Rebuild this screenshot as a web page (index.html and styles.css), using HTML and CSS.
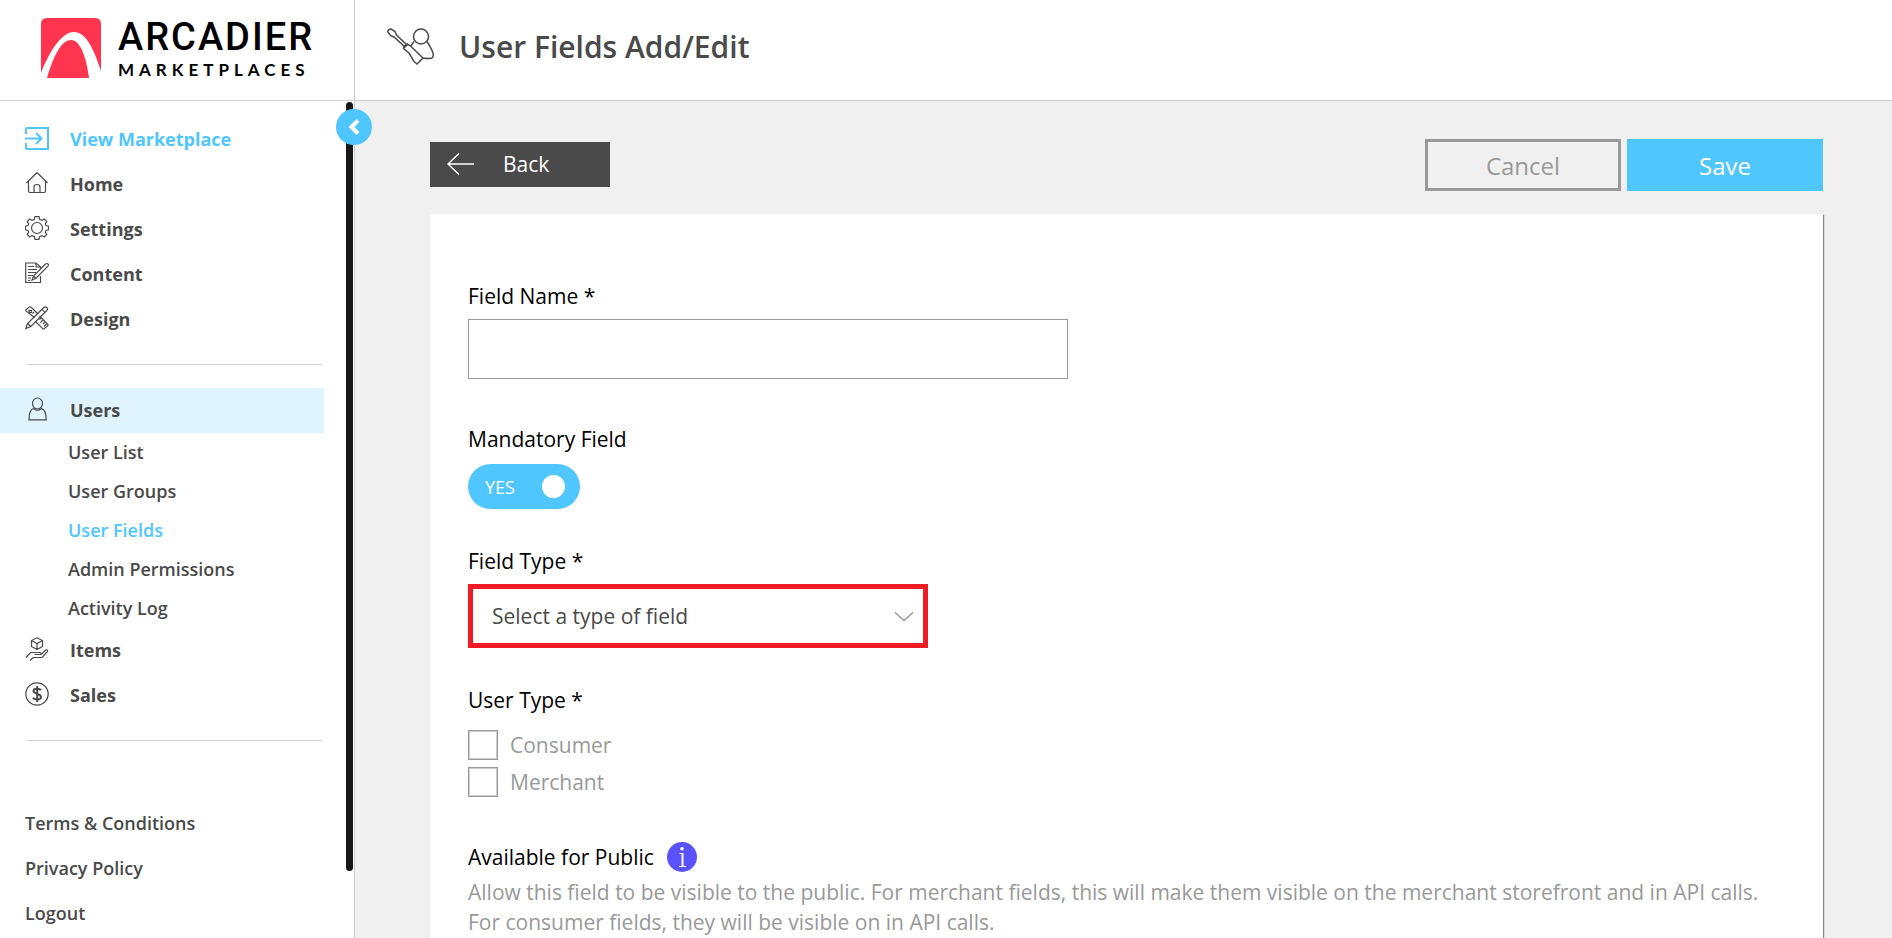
FILE: index.html
```
<!DOCTYPE html>
<html lang="en">

<head>
    <meta charset="utf-8">
    <meta name="viewport" content="width=device-width, initial-scale=1">
    <title>User Fields Add/Edit</title>
    <link rel="stylesheet" href="styles.css">
</head>

<body>
    <div class="page">
        <aside class="sidebar">
            <a class="logo" href="#">
                <svg class="logo-mark" width="60" height="60" viewBox="0 0 60 60">
                    <path fill="#ff3550" d="M0 55V6Q0 0 6 0H54Q60 0 60 6V53C52 28 44 14 33 14C21 14 9 32 0 55Z" />
                    <path fill="#ff3550" d="M6 60C12 39 20 22 30 22C39 22 45 38 48 60Z" />
                </svg>
                <span class="logo-text">
                    <span class="logo-name">ARCADIER</span>
                    <span class="logo-sub">MARKETPLACES</span>
                </span>
            </a>

            <nav class="nav">
                <a class="nav-item highlight" href="#">
                    <svg class="icon" viewBox="0 0 24 24"><path stroke-width="2" d="M1 8V3Q1 2 2 2H23V23H2Q1 23 1 22V17M0 12.500H16M11 7L16.500 12.500L11 18" /></svg>
                    View Marketplace
                </a>
                <a class="nav-item" href="#">
                    <svg class="icon" viewBox="0 0 24 24"><path d="M1.500 12L11 2.500Q12 1.500 13 2.500L22.500 12M3.500 10.500V20Q3.500 21.500 5 21.500H19Q20.500 21.500 20.500 20V10.500M9 21.500V16Q9 13.500 12 13.500Q15 13.500 15 16V21.500" /></svg>
                    Home
                </a>
                <a class="nav-item" href="#">
                    <svg class="icon" viewBox="0 0 24 24">
                        <circle cx="12" cy="12" r="5.500" />
                        <path d="M10 .7H14L14.600 3.400L17 4.400L19.300 3L21.800 5.500L20.300 7.800L21 9.600L23.500 10.200V13.800L21 14.400L20.300 16.200L21.800 18.500L19.300 21L17 19.600L14.600 20.600L14 23.300H10L9.400 20.600L7 19.600L4.700 21L2.200 18.500L3.700 16.200L3 14.400L.5 13.800V10.200L3 9.600L3.700 7.800L2.200 5.500L4.700 3L7 4.400L9.400 3.400Z" />
                    </svg>
                    Settings
                </a>
                <a class="nav-item" href="#">
                    <svg class="icon" viewBox="0 0 24 24"><path d="M15.500 15V21.500H.7V2H11L15.500 6V8M11 2V6H15.500M3 5.500H9M3 8.500H12M3 11.500H11M3 14.500H8M3 17H6M3 19.500H5M7 19L8.500 15L20.500 3Q22 2 23 3Q23.800 4 23 5.200L11 17.200ZM8.500 15L11 17.200" /></svg>
                    Content
                </a>
                <a class="nav-item" href="#">
                    <svg class="icon" viewBox="0 0 24 24">
                        <path d="M9.500 11.500L1 5L.8 4L4.500 .8L6 1L13 8M14.500 10L23 18.500V19.500L19 23H18L10.500 15.500M4 4.500H6.500V6.500H4.500ZM9 6L7.500 7.500M16 12L14.500 13.500M18 14L15.500 16.500M20 16L18 18M21.500 18L19 20.500" />
                        <path d="M.8 22.500L2.500 17.500L18.500 1.800Q20.500 .3 21.800 1.500Q23.300 3 21.800 4.500L5.800 20.500ZM2.500 17.500L5.800 20.500M17 3.300L20 6.300" />
                    </svg>
                    Design
                </a>

                <hr class="divider">

                <a class="nav-item active" href="#">
                    <svg class="icon" viewBox="0 0 24 24"><ellipse cx="12.500" cy="6.500" rx="5" ry="5.500" /><path d="M8.500 11.500C5 12.500 4 16 4 22.800H21.200C21.200 16 20 12.500 16.500 11.500Q12.500 15 8.500 11.500Z" /></svg>
                    Users
                </a>
                <div class="submenu">
                    <a class="sub-item" href="#">User List</a>
                    <a class="sub-item" href="#">User Groups</a>
                    <a class="sub-item highlight" href="#">User Fields</a>
                    <a class="sub-item" href="#">Admin Permissions</a>
                    <a class="sub-item" href="#">Activity Log</a>
                </div>
                <a class="nav-item" href="#">
                    <svg class="icon" viewBox="0 0 24 24"><path d="M12 .8L17.500 3.500V9.500L12 12.500L6.500 9.500V3.500ZM6.500 3.500L12 6.500L17.500 3.500M12 6.500V12.500M1 20.500L5.500 15.500H14.500Q16.500 15.500 16 17.500H9.500M16 17.500L21 12.800Q23 12.500 22.500 14.500L17 20.500H8L5 23.500" /></svg>
                    Items
                </a>
                <a class="nav-item" href="#">
                    <svg class="icon" viewBox="0 0 24 24"><circle cx="12" cy="12" r="11.200" /><path stroke-width="2" d="M16 8.300C15 6.700 8.500 5.500 8.500 9C8.500 12.200 16 11 16 15C16 18.500 9 18 8 15.700M12.200 4V20" /></svg>
                    Sales
                </a>

                <hr class="divider">

                <div class="nav-footer">
                    <a class="footer-item" href="#">Terms &amp; Conditions</a>
                    <a class="footer-item" href="#">Privacy Policy</a>
                    <a class="footer-item" href="#">Logout</a>
                </div>
            </nav>

            <div class="scroll-thumb"></div>
            <button class="collapse" type="button" aria-label="Collapse menu">
                <svg width="36" height="36" viewBox="0 0 36 36"><path fill="none" stroke="#fff" stroke-width="4" d="M22 11.500L15.500 18L22 24.500" /></svg>
            </button>
        </aside>

        <main class="main">
            <header class="header">
                <svg class="header-icon" width="48" height="40" viewBox="0 0 48 40">
                    <circle cx="34" cy="9.500" r="7.500" />
                    <path d="M.8 5Q.8 2 4 2L8 4.500L9.500 8L20 18L18 20L7 10L3.500 8.500ZM20 17L23 18.500L36 31L30 37L27 34.500L22 26L16.500 21.500L17 19.500ZM27 14.500L24 19M40 14.500Q49 28 45 31Q42 32 36 31" />
                </svg>
                <h1 class="title">User Fields Add/Edit</h1>
            </header>

            <form class="content">
                <div class="actions">
                    <button class="btn-back" type="button">
                        <svg width="28" height="24" viewBox="0 0 28 24"><path fill="none" stroke="#fff" stroke-width="1.500" d="M27 12H1M12 1.500L1 12L12 22.500" /></svg>
                        Back
                    </button>
                    <div class="actions-right">
                        <button class="btn btn-cancel" type="button">Cancel</button>
                        <button class="btn btn-save" type="submit">Save</button>
                    </div>
                </div>

                <div class="card">
                    <div class="field">
                        <label class="label" for="field-name">Field Name *</label>
                        <input class="text-input" type="text" id="field-name">
                    </div>

                    <div class="field field-tight">
                        <label class="label" for="mandatory">Mandatory Field</label>
                        <label class="switch">
                            <input type="checkbox" id="mandatory" checked>
                            <span>YES</span>
                            <span class="knob"></span>
                        </label>
                    </div>

                    <div class="field field-tight">
                        <label class="label" for="field-type">Field Type *</label>
                        <div class="select-box">
                            <select id="field-type">
                                <option>Select a type of field</option>
                            </select>
                            <svg class="chevron" width="20" height="12" viewBox="0 0 20 12"><path fill="none" stroke="#999" stroke-width="1.500" d="M1 1.500L10 9.500L19 1.500" /></svg>
                        </div>
                    </div>

                    <fieldset class="field">
                        <legend class="label">User Type *</legend>
                        <div class="checks">
                            <label class="check"><input type="checkbox" name="consumer">Consumer</label>
                            <label class="check"><input type="checkbox" name="merchant">Merchant</label>
                        </div>
                    </fieldset>

                    <div class="field">
                        <div class="public-title">
                            Available for Public
                            <svg width="30" height="30" viewBox="0 0 30 30">
                                <circle cx="15" cy="15" r="15" fill="#5b52ff" />
                                <circle cx="15" cy="6.700" r="1.800" fill="#fff" />
                                <path fill="none" stroke="#fff" stroke-width="2" d="M15.500 11V24" />
                                <path fill="none" stroke="#fff" d="M12.500 11.500H16M12 24.500H19" />
                            </svg>
                        </div>
                        <p class="help">Allow this field to be visible to the public. For merchant fields, this will make them visible on the merchant storefront and in API calls.<br>For consumer fields, they will be visible on in API calls.</p>
                    </div>
                </div>
            </form>
        </main>
    </div>
</body>

</html>
```

FILE: styles.css
```
* {
    box-sizing: border-box;
}

body {
    margin: 0;
    font-family: "Open Sans", sans-serif;
    color: #4a4a4a;
}

a {
    color: inherit;
    text-decoration: none;
}

.page {
    display: flex;
    height: 100vh;
    overflow: hidden;
}

/* Sidebar */
.sidebar {
    position: relative;
    flex: none;
    width: 355px;
    border-right: 1px solid #ccc;
    background-color: #fff;
}

.logo {
    display: flex;
    align-items: center;
    gap: 17px;
    height: 101px;
    padding: 0 0 4px 41px;
    border-bottom: 1px solid #d4d4d4;
    color: #000;
}

.logo-text {
    display: flex;
    flex-direction: column;
}

.logo-name {
    font-family: Roboto, sans-serif;
    font-size: 38px;
    font-weight: 500;
    line-height: 44px;
    letter-spacing: 2px;
}

.logo-sub {
    font-family: Lato, sans-serif;
    font-size: 17px;
    font-weight: 700;
    line-height: 22px;
    letter-spacing: 5px;
}

.nav {
    padding-top: 16px;
}

.nav-item {
    display: flex;
    align-items: center;
    gap: 21px;
    width: 324px;
    height: 45px;
    padding: 0 0 2px 25px;
    font-size: 18px;
    font-weight: 700;
}

.icon {
    flex: none;
    width: 24px;
    height: 24px;
    margin-bottom: 2px;
    fill: none;
    stroke: currentColor;
    stroke-width: 1.2;
}

.highlight {
    color: #50c6ff;
}

.active {
    background-color: #dff4ff;
}

.divider {
    height: 1px;
    margin: 22px 32px 23px 27px;
    border: 0;
    background-color: #d4d4d4;
}

.sub-item {
    display: block;
    padding-left: 68px;
    font-size: 18px;
    font-weight: 600;
    line-height: 39px;
}

.nav-footer {
    padding: 37px 0 0 25px;
}

.footer-item {
    display: block;
    font-size: 18px;
    font-weight: 600;
    line-height: 45px;
}

.scroll-thumb {
    position: absolute;
    top: 102px;
    right: 1px;
    width: 7px;
    height: 82%;
    border-radius: 4px;
    background-color: #181818;
}

.collapse {
    position: absolute;
    top: 109px;
    right: -18px;
    width: 36px;
    height: 36px;
    padding: 0;
    border: 0;
    border-radius: 50%;
    background-color: #50c6ff;
    cursor: pointer;
}

.collapse svg {
    display: block;
}

/* Main area */
.main {
    flex: 1;
    min-width: 0;
    background-color: #f0f0f0;
}

.header {
    display: flex;
    align-items: center;
    gap: 24px;
    height: 101px;
    padding: 0 32px 7px;
    border-bottom: 1px solid #ccc;
    background-color: #fff;
}

.header-icon {
    fill: none;
    stroke: #4a4a4a;
    stroke-width: 1.5;
}

.title {
    margin: 0;
    font-size: 30px;
    font-weight: 600;
}

.content {
    padding: 38px 69px 0 75px;
}

.actions {
    display: flex;
    align-items: center;
    justify-content: space-between;
    margin-bottom: 23px;
}

.actions-right {
    display: flex;
    gap: 6px;
}

.btn-back {
    display: flex;
    align-items: center;
    gap: 28px;
    width: 180px;
    height: 45px;
    margin-bottom: 2px;
    padding: 0 17px;
    border: 0;
    background-color: #4a4a4a;
    color: #fff;
    font-family: inherit;
    font-size: 21px;
    cursor: pointer;
}

.btn {
    width: 196px;
    height: 52px;
    padding: 0;
    border: 3px solid #999;
    background-color: transparent;
    color: #999;
    font-family: inherit;
    font-size: 24px;
    cursor: pointer;
}

.btn-save {
    border-color: #50c6ff;
    background-color: #50c6ff;
    color: #fff;
}

.card {
    padding: 67px 38px;
    background-color: #fff;
    box-shadow: 1px 1px 1px #888;
}

.field {
    margin: 0 0 45px;
    padding: 0;
    border: 0;
}

.field-tight {
    margin-bottom: 37px;
}

.label {
    display: block;
    margin-bottom: 8px;
    padding: 0;
    color: #000;
    font-size: 21px;
    line-height: 30px;
}

.text-input {
    display: block;
    width: 100%;
    max-width: 600px;
    height: 60px;
    padding: 0 20px;
    border: 1px solid #999;
    font-family: inherit;
    font-size: 21px;
}

.switch {
    position: relative;
    display: flex;
    align-items: center;
    justify-content: space-between;
    width: 112px;
    height: 45px;
    margin-top: 10px;
    padding: 0 15px 0 17px;
    border-radius: 23px;
    background-color: #50c6ff;
    color: #fff;
    font-size: 18px;
    cursor: pointer;
}

.switch input {
    position: absolute;
    opacity: 0;
}

.knob {
    width: 23px;
    height: 23px;
    border-radius: 50%;
    background-color: #fff;
}

.select-box {
    position: relative;
    max-width: 460px;
}

.select-box select {
    display: block;
    width: 100%;
    height: 64px;
    padding: 0 40px 0 19px;
    border: 5px solid #ef1c24;
    border-radius: 0;
    background-color: #fff;
    color: #4a4a4a;
    font-family: inherit;
    font-size: 21px;
    appearance: none;
}

.chevron {
    position: absolute;
    top: 27px;
    right: 14px;
    pointer-events: none;
}

.checks {
    display: flex;
    flex-direction: column;
    gap: 7px;
    padding-top: 7px;
}

.check {
    display: flex;
    align-items: center;
    gap: 12px;
    color: #999;
    font-size: 21px;
    line-height: 30px;
}

.check input {
    width: 30px;
    height: 30px;
    margin: 0;
    border: 1px solid #999;
    box-shadow: inset 0 0 0 1px #ccc;
    appearance: none;
}

.public-title {
    display: flex;
    align-items: center;
    gap: 13px;
    color: #000;
    font-size: 21px;
    line-height: 30px;
}

.help {
    margin: 5px 0 0;
    color: #999;
    font-size: 21px;
    line-height: 30px;
}
```
